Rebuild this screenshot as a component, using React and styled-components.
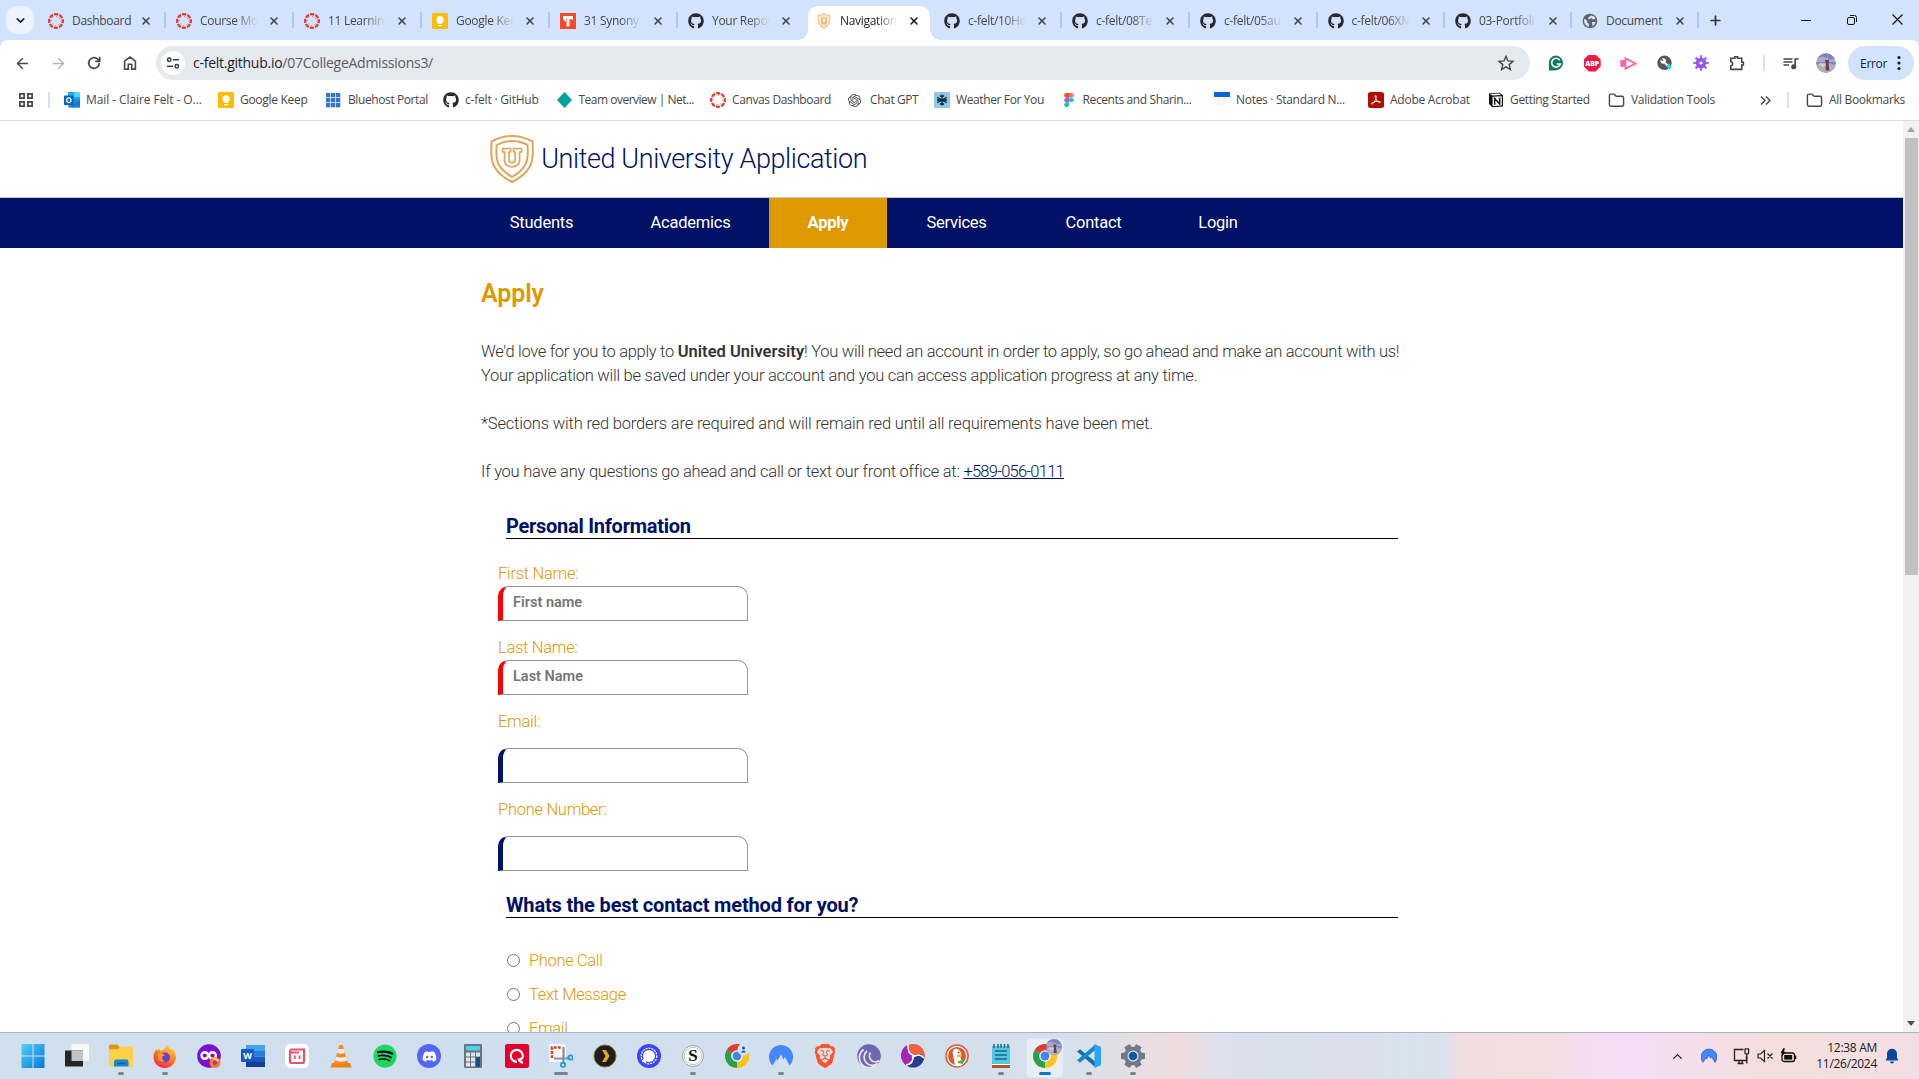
import React from "react";
import styled, { createGlobalStyle, css } from "styled-components";
import { FaGithub, FaSpotify, FaDiscord } from "react-icons/fa";
import { SiOpenai, SiBrave } from "react-icons/si";
import { ArrowLeft, ArrowRight, ChevronDown, ChevronUp, Plus, X, Folder } from "lucide-react";

const NAVY = "#001166";
const GOLD = "#de9800";

const Global = createGlobalStyle`
  * { box-sizing: border-box; }
  html, body { margin: 0; height: 100%; overflow: hidden; background: #fff; }
  svg { display: block; flex: none; }
`;

const Screen = styled.div`
  width: 1919px;
  height: 1079px;
  display: flex;
  flex-direction: column;
  overflow: hidden;
  font-family: "Open Sans", "Noto Sans", sans-serif;
`;

/* ---------- Browser tabs ---------- */
const TabStrip = styled.div`
  height: 40px;
  flex: none;
  display: flex;
  align-items: center;
  background: #d3e3fd;
  padding-left: 6px;
`;
const TabSearch = styled.button`
  width: 28px;
  height: 28px;
  border: 0;
  padding: 0;
  margin-right: 4px;
  border-radius: 10px;
  background: #ecf3fe;
  display: grid;
  place-items: center;
  color: #1f1f1f;
`;
const Tab = styled.div`
  position: relative;
  width: ${(p) => p.$w || 128}px;
  height: 34px;
  align-self: flex-end;
  flex: none;
  display: flex;
  align-items: center;
  padding: 0 10px 4px 10px;
  font-size: 12px;
  letter-spacing: -0.3px;
  color: #474747;
  ${(p) => p.$line && css`
    &::after {
      content: "";
      position: absolute;
      right: 0;
      top: 6px;
      width: 2px;
      height: 16px;
      background: #a8c7fa;
    }
  `}
  ${(p) => p.$active && css`
    color: #1f1f1f;
    &::before {
      content: "";
      position: absolute;
      z-index: 0;
      left: 2px;
      right: 4px;
      top: 0;
      bottom: 0;
      background: #fff;
      border-radius: 10px 10px 0 0;
    }
  `}
`;
const Flare = styled.i`
  position: absolute;
  bottom: 0;
  width: 10px;
  height: 10px;
  ${(p) => p.$side}: ${(p) => (p.$side === "left" ? -8 : -6)}px;
  background: radial-gradient(circle at ${(p) => (p.$side === "left" ? "0 0" : "100% 0")}, transparent 9.5px, #fff 10px);
`;
const TabIcon = styled.span`
  position: relative;
  width: 16px;
  height: 16px;
  margin-right: 8px;
  flex: none;
`;
const TabTitle = styled.span`
  position: relative;
  width: 58px;
  flex: none;
  white-space: nowrap;
  line-height: 18px;
  ${(p) => p.$fade && css`mask-image: linear-gradient(90deg, #000 62%, transparent 100%);`}
`;
const TabClose = styled.span`
  position: relative;
  margin-left: 8px;
  width: 16px;
  display: grid;
  place-items: center;
`;
const NewTab = styled.span`
  width: 28px;
  margin-left: 2px;
  display: grid;
  place-items: center;
  color: #303030;
`;
const WindowControls = styled.div`
  margin-left: auto;
  margin-bottom: 1px;
  display: flex;
  color: #111;
`;
const WindowButton = styled.span`
  width: 46px;
  height: 28px;
  display: grid;
  place-items: center;
  &:last-child { width: 44px; }
`;

/* ---------- Toolbar ---------- */
const ToolbarBack = styled.div`
  background: #d3e3fd;
  flex: none;
`;
const Toolbar = styled.div`
  height: 46px;
  background: #fff;
  border-radius: 8px 8px 0 0;
  display: flex;
  align-items: center;
  padding: 0 5px 0 4px;
  color: #474747;
`;
const NavButton = styled.span`
  width: 36px;
  display: grid;
  place-items: center;
  color: ${(p) => (p.$off ? "#b5b5b5" : "#474747")};
`;
const Omnibox = styled.div`
  width: 1374px;
  height: 34px;
  margin-left: 8px;
  border-radius: 17px;
  background: #e5e9f0;
  display: flex;
  align-items: center;
  padding: 0 15px 0 5px;
`;
const SiteInfo = styled.span`
  width: 24px;
  height: 24px;
  border-radius: 50%;
  background: #fff;
  display: grid;
  place-items: center;
`;
const Url = styled.span`
  flex: 1;
  margin: -1px 0 0 8px;
  font-size: 14px;
  letter-spacing: -0.26px;
  color: #5a5d61;
  b { font-weight: 400; color: #1f1f1f; }
`;
const Extensions = styled.div`
  display: flex;
  align-items: center;
  margin-left: 8px;
`;
const ExtButton = styled.span`
  width: 36.2px;
  display: grid;
  place-items: center;
`;
const Rule = styled.i`
  width: 2px;
  height: 16px;
  background: #d3e3fd;
  margin-left: ${(p) => p.$l || 0}px;
  margin-right: ${(p) => p.$r || 0}px;
`;
const Avatar = styled.span`
  width: 20px;
  height: 20px;
  margin: 0 12px 0 17px;
  border-radius: 50%;
  overflow: hidden;
`;
const ErrorPill = styled.span`
  width: 66px;
  height: 34px;
  border-radius: 17px;
  background: #d3e3fd;
  color: #041e49;
  font-size: 12px;
  letter-spacing: -0.3px;
  display: flex;
  align-items: center;
  justify-content: space-between;
  padding: 0 13px 0 12px;
`;

/* ---------- Bookmarks ---------- */
const BookmarkBar = styled.div`
  height: 35px;
  flex: none;
  display: flex;
  align-items: center;
  padding: 0 14px 6px 18px;
  background: #fff;
  border-bottom: 1px solid #dcdcdc;
  color: #474747;
  font-size: 12px;
`;
const Bookmark = styled.span`
  width: ${(p) => p.$w}px;
  flex: none;
  display: flex;
  align-items: center;
  gap: 6px;
  white-space: nowrap;
`;
const BookmarkLabel = styled.span`
  margin-top: -1px;
  letter-spacing: ${(p) => p.$ls ?? -0.3}px;
`;
const Overflow = styled.span`
  margin-left: auto;
`;
const BIcon = styled.span`
  width: 16px;
  height: 16px;
  flex: none;
  display: flex;
  align-items: center;
`;

/* ---------- Page ---------- */
const Viewport = styled.div`
  height: 911px;
  flex: none;
  display: flex;
  overflow: hidden;
`;
const Page = styled.div`
  flex: 1;
  height: 911px;
  overflow: hidden;
  background: #fff;
  font-family: Roboto, "Liberation Sans", sans-serif;
  font-weight: 300;
  font-size: 16.5px;
  color: #333;
`;
const SiteHeader = styled.header`
  height: 77px;
  border-bottom: 1px solid #c8c8c8;
  display: flex;
  align-items: center;
  padding: 0 0 0 490px;
  gap: 7px;
`;
const SiteTitle = styled.h1`
  margin: 0;
  font-size: 27px;
  font-weight: 300;
  letter-spacing: -0.39px;
  color: ${NAVY};
`;
const SiteNav = styled.nav`
  height: 50px;
  background: ${NAVY};
  display: flex;
  padding-left: 471px;
`;
const NavLink = styled.a`
  width: ${(p) => p.$w}px;
  display: grid;
  place-items: center;
  padding-bottom: 2px;
  color: #fff;
  letter-spacing: -0.25px;
  font-weight: ${(p) => (p.$active ? 700 : 400)};
  background: ${(p) => (p.$active ? GOLD : "transparent")};
`;
const Main = styled.main`
  width: 942px;
  margin-left: 481px;
`;
const PageTitle = styled.h2`
  margin: 0;
  padding-top: 29px;
  height: 92px;
  font-size: 25px;
  line-height: 34px;
  font-weight: 600;
  color: ${GOLD};
  letter-spacing: -0.1px;
`;
const Copy = styled.p`
  margin: 0 0 24px;
  line-height: 24px;
  letter-spacing: -0.25px;
  white-space: nowrap;
  b { font-weight: 600; letter-spacing: 0.03px; }
  a { color: ${NAVY}; text-decoration: underline; letter-spacing: -0.75px; }
`;
const Tracked = styled.span`
  letter-spacing: ${(p) => p.$ls}px;
`;
const Legend = styled.h3`
  width: 892px;
  height: 27px;
  margin: ${(p) => p.$top}px 0 0 25px;
  border-bottom: 1px solid #000;
  font-size: 20px;
  line-height: 29px;
  font-weight: 700;
  letter-spacing: ${(p) => p.$ls}px;
  color: ${NAVY};
`;
const Field = styled.label`
  display: block;
  margin-left: 17px;
  padding-top: ${(p) => p.$top}px;
  line-height: 24px;
  letter-spacing: -0.28px;
  color: ${GOLD};
`;
const Input = styled.input`
  display: block;
  width: 250px;
  height: 35px;
  margin: ${(p) => p.$gap || 0}px 0 0;
  padding: 0 10px 2px;
  border: 1px solid #999;
  border-left: 5px solid ${(p) => (p.$required ? "#f00" : NAVY)};
  border-radius: 10px 10px 0 0;
  outline: none;
  font: 600 14.5px Roboto, sans-serif;
  &::placeholder { color: #757575; opacity: 1; }
`;
const Options = styled.div`
  padding: 25px 0 0 26px;
`;
const Option = styled.label`
  height: 34.3px;
  display: flex;
  align-items: center;
  gap: 9px;
  color: ${GOLD};
  letter-spacing: -0.35px;
  input { width: 13px; height: 13px; margin: 0; }
`;
const Scrollbar = styled.div`
  width: 16px;
  background: #f1f1f1;
  display: flex;
  flex-direction: column;
  align-items: center;
  padding: 6px 0 6px;
`;
const Thumb = styled.div`
  width: 13px;
  height: 437px;
  margin: 6px 0 auto;
  background: #c1c1c1;
`;

/* ---------- Taskbar ---------- */
const Taskbar = styled.footer`
  height: 47px;
  flex: none;
  display: flex;
  align-items: center;
  border-top: 1px solid #a9b2be;
  padding: 0 19px 0 11px;
  background: linear-gradient(90deg,
    #d2e0ed 0, #d0dfee 500px, #d4e1ec 1060px, #ebdde1 1150px, #ecdcdf 1180px, #dfe0eb 1220px,
    #d8e2ed 1290px, #dedfeb 1340px, #d8e3ee 1400px, #dae2ec 1445px, #f1dddf 1462px,
    #f3dfe0 1540px, #f3def2 1590px, #f3def6 1640px, #f3dfec 1690px, #f5dedb 1770px, #f4dfe0 1840px, #f3dde4 1919px);
`;
const TaskItem = styled.span`
  width: 44px;
  height: 46px;
  flex: none;
  display: flex;
  flex-direction: column;
  align-items: center;
  justify-content: flex-end;
  gap: 4px;
  padding-bottom: 4px;
`;
const TaskTile = styled.span`
  position: relative;
  width: 38px;
  height: 24px;
  display: grid;
  place-items: center;
  ${(p) => p.$active && css`
    &::before {
      content: "";
      position: absolute;
      left: 0;
      right: 0;
      top: -6px;
      height: 38px;
      border-radius: 4px;
      background: #e7eef6;
      border: 1px solid #dbe3ec;
    }
  `}
  svg { position: relative; }
`;
const Indicator = styled.i`
  position: relative;
  width: ${(p) => p.$w}px;
  height: 3px;
  border-radius: 2px;
  background: ${(p) => (p.$active ? "#0b74d1" : "#7b8289")};
`;
const Tray = styled.div`
  margin-left: auto;
  display: flex;
  align-items: center;
  color: #1c1c1c;
`;
const TrayIcon = styled.span`
  width: ${(p) => p.$w}px;
  display: grid;
  place-items: center;
`;
const Clock = styled.div`
  width: 73px;
  margin: -1px 7px 0 0;
  font-size: 12px;
  line-height: 16px;
  text-align: right;
  letter-spacing: -0.3px;
  color: #1a1a1a;
`;

/* ---------- Icons ---------- */
const Svg = ({ s = 16, v = 16, children, ...r }) => (
  <svg width={s} height={s} viewBox={`0 0 ${v} ${v}`} fill="none" {...r}>{children}</svg>
);
const Canvas = () => (
  <Svg>
    <circle cx="8" cy="8" r="6.8" stroke="#e03b30" strokeWidth="2.3" strokeDasharray="4.2 1.14" strokeDashoffset="2.1" />
    <circle cx="8" cy="8" r="4.6" stroke="#e03b30" strokeWidth="0.9" strokeDasharray="0.9 2.71" strokeDashoffset="0.45" />
  </Svg>
);
const Keep = () => (
  <Svg>
    <rect width="16" height="16" rx="1.6" fill="#fbbc04" />
    <circle cx="8" cy="6.8" r="3.6" fill="#fff" />
    <path d="M6 9h4v2H6zM6 12h4v1.2H6z" fill="#fff" />
  </Svg>
);
const Thesaurus = () => (
  <Svg>
    <rect width="16" height="16" fill="#f9472a" />
    <path d="M3 3h10v3.6h-2.2V6H9.5v7.5H6.6V8.6C4.5 8.6 3 7.2 3 5z" fill="#fff" />
    <path d="M6.600 5.500v2" stroke="#f9472a" strokeWidth="0.8" />
  </Svg>
);
const Shield = ({ s = 16 }) => (
  <svg width={s * 0.92} height={s} viewBox="0 0 44 48" fill="none" stroke="#dda658" strokeWidth="2" strokeLinejoin="round">
    <path d="M22 1C15 1 8 3 1.500 6.500C1 20 1 26 4.500 32C9 40 16 44 22 47C28 44 35 40 39.500 32C43 26 43 20 42.500 6.500C36 3 29 1 22 1Z" />
    <path d="M22 6C16 6 11 7.500 6.500 10C6.200 20 6 25 9 30C12.500 36 17 39 22 42C27 39 31.500 36 35 30C38 25 37.800 20 37.500 10C33 7.500 28 6 22 6Z" />
    <path d="M12.500 13.500H20.500V17H19V25C19 28.400 25 28.400 25 25V17H23.500V13.500H31.500V17H29.500V25.500C29.500 34 14.500 34 14.500 25.500V17H12.500Z" strokeWidth="1.700" />
  </svg>
);
const SmallShield = () => (
  <Svg>
    <path d="M8 .8 13.800 2.600C14 7 14 12 8 15.200C2 12 2 7 2.200 2.600Z" fill="#fae8cd" stroke="#ecc58e" strokeWidth="1.200" />
    <path d="M5 4.500h6V9c0 3.500-6 3.500-6 0z" fill="#e9bd7f" />
    <path d="M7 5.500h2v3.300H7z" fill="#fff" />
  </Svg>
);
const Globe = () => (
  <Svg>
    <circle cx="8" cy="8" r="7.300" fill="#5f6368" />
    <path d="M2 6c2 0 3 1 3 2.500S7 10 7 11.500L6.500 14C4 13 2 10.500 2 8zM9 2.500c2 0 3.800 1.300 4.500 3L11 6.500 9.500 5 7 6.500 5.800 5C7 4.500 7.500 3 9 2.500zM10 9l3.500 0c-.3 2-1.500 3.500-3 4.300z" fill="#d3e3fd" />
  </Svg>
);
const Outlook = () => (
  <Svg>
    <rect x="4" y="0" width="12" height="8" fill="#28a8ea" />
    <rect x="10" y="0" width="6" height="5" fill="#50d9ff" />
    <path d="M3 7l13 0v8.500H4.500z" fill="#1490df" />
    <path d="M16 7.500v8H5z" fill="#0f6cbd" opacity=".55" />
    <rect x="0" y="3.500" width="9.500" height="9.500" rx="0.800" fill="#0364b8" />
    <ellipse cx="4.800" cy="8.200" rx="2.100" ry="2.400" stroke="#fff" strokeWidth="1.300" />
  </Svg>
);
const Grid9 = () => (
  <Svg>
    {[0, 1, 2].map((r) => [0, 1, 2].map((c) => (
      <rect key={`${r}${c}`} x={c * 5} y={1 + r * 5} width="4.300" height="4.300" fill="#3575d3" />
    )))}
  </Svg>
);
const Diamond = () => <Svg><path d="M7.500 0l7.500 8-7.500 8L0 8z" fill="#05a19b" /></Svg>;
const Snow = () => (
  <Svg>
    <rect width="16" height="16" fill="#8ec9e6" />
    <g stroke="#0d2a3a" strokeWidth="1.200">
      <path d="M8 2.500v11M3.300 5.200l9.400 5.600M3.300 10.800l9.400-5.600M6 3.500l2 1.800 2-1.800M6 12.500l2-1.800 2 1.800M3.200 7l2.300 1-2.300 1M12.800 7l-2.300 1 2.300 1" />
    </g>
  </Svg>
);
const Figma = () => (
  <Svg>
    <path d="M5.500 1H8v4.700H5.500a2.350 2.350 0 0 1 0-4.700z" fill="#f24e1e" />
    <path d="M8 1h2.500a2.350 2.350 0 0 1 0 4.700H8z" fill="#ff7262" />
    <path d="M5.500 5.700H8v4.700H5.500a2.350 2.350 0 0 1 0-4.700z" fill="#a259ff" />
    <circle cx="10.400" cy="8" r="2.350" fill="#1abcfe" />
    <path d="M5.500 10.400H8v2.400a2.400 2.400 0 1 1-2.500-2.400z" fill="#0acf83" />
  </Svg>
);
const Notes = () => (
  <Svg>
    <rect y="0" width="16" height="5" fill="#0b66d8" />
    <path d="M3 7h12M3 9h9M3 11h10M3 12.800h7" stroke="#eeeeee" strokeWidth="1" />
  </Svg>
);
const Acrobat = () => (
  <Svg>
    <rect width="16" height="16" rx="2.500" fill="#b30b00" />
    <path d="M7.500 3.500c1.500 0 .5 3-.5 5S4.500 12.800 3.700 12c-.8-1 2-2.300 4.500-2.600s4.600.1 4.200 1c-.5 1-3-.8-4-2.400S6.300 3.500 7.500 3.500z" stroke="#fff" />
  </Svg>
);
const Notion = () => (
  <Svg>
    <path d="M1 1.500 11.500.7 15 3.200V14.500L4.500 15.300 1 12z" fill="#111" />
    <path d="M2 2.200l9-.6 2 1.300-8.600.6z" fill="#fff" />
    <path d="M4.600 4.800l9.200-.6v9.200l-9.200.7z" fill="#fff" />
    <path d="M6.700 12V6.500l5 5.500V6.200" stroke="#111" strokeWidth="1.400" />
    <path d="M5.700 6.400h2M10.600 6h2M5.700 12.200h2" stroke="#111" strokeWidth=".8" />
  </Svg>
);
const AppsIcon = () => (
  <Svg stroke="#474747" strokeWidth="1.700">
    <path d="M1.900 1.900h4.200v4.200H1.900zM9.900 1.900h4.200v4.200H9.900zM1.900 9.900h4.200v4.200H1.900zM9.900 9.900h4.200v4.200H9.900z" />
  </Svg>
);
const Tune = () => (
  <Svg stroke="#3c3c3c" strokeWidth="1.500">
    <circle cx="4.200" cy="4.700" r="1.700" /><path d="M8 4.700h6" />
    <circle cx="11.800" cy="11.300" r="1.700" /><path d="M2 11.300h6" />
  </Svg>
);
const Reload = () => (
  <Svg stroke="#474747" strokeWidth="1.700">
    <path d="M13.300 8A5.300 5.300 0 1 1 11.600 4.100L13.200 5.700" />
    <path d="M13.700 1.800v4.500H9.200" />
  </Svg>
);
const Home = () => (
  <Svg stroke="#474747" strokeWidth="1.600">
    <path d="M2.600 14.100V6.200L8 2l5.400 4.200v7.900H9.700V9.300H6.300v4.800z" />
  </Svg>
);
const StarIcon = () => (
  <Svg s={18} v={18} stroke="#474747" strokeWidth="1.400">
    <path d="M9 2.200l2 4.700 5 .4-3.800 3.300 1.200 5L9 12.900l-4.400 2.700 1.200-5L2 7.300l5-.4z" />
  </Svg>
);
const Grammarly = () => (
  <Svg>
    <path d="M8 .6a7.400 7.400 0 1 1-1 14.800H.9V8A7.300 7.300 0 0 1 8 .6z" fill="#0c7a60" />
    <path d="M11.700 5.200A4.400 4.400 0 1 0 12.300 9H8.800" stroke="#fff" strokeWidth="1.600" />
  </Svg>
);
const AbpBox = styled.span`
  width: 17px;
  height: 17px;
  display: grid;
  place-items: center;
  background: #ed1e45;
  clip-path: polygon(30% 0, 70% 0, 100% 30%, 100% 70%, 70% 100%, 30% 100%, 0 70%, 0 30%);
  color: #fff;
  font-size: 7px;
  font-weight: 800;
  letter-spacing: -0.2px;
`;
const PinkPlay = () => (
  <Svg s={17}>
    <path d="M.3 4.800v6.400h5V4.800z" fill="#f765b8" />
    <path d="M5.200 3.200 14.600 8l-9.400 4.800z" fill="#fff" stroke="#f765b8" strokeWidth="1.800" />
  </Svg>
);
const Wrench = () => (
  <Svg>
    <circle cx="7.500" cy="7.800" r="7.200" fill="#54585c" />
    <circle cx="6.200" cy="6" r="2.700" fill="#fff" />
    <path d="M3.200 3.200l3 2.600" stroke="#54585c" strokeWidth="1.300" />
    <path d="M7.500 7.500l3 3" stroke="#fff" strokeWidth="2.200" />
    <path d="M9.500 11l2.500-2.500 3 3.500-3 3z" fill="#2bd5dc" />
  </Svg>
);
const Flower = () => (
  <Svg>
    <g stroke="#a263f2" strokeWidth="2.200">
      <path d="M8 .3v15.400M.3 8h15.400M2.600 2.600l10.800 10.800M13.400 2.600L2.600 13.400" />
    </g>
    <circle cx="8" cy="8" r="5.200" fill="#9655ea" /><circle cx="8" cy="8" r="1.600" fill="#fff" />
  </Svg>
);
const Puzzle = () => (
  <Svg stroke="#474747" strokeWidth="1.600">
    <path d="M1.800 3.200h4V1.800h2.800v1.400h4.200v4h1.600v2.800h-1.600v4.400H1.800v-3.600c2.600-.4 2.600-3.800 0-4.200z" />
  </Svg>
);
const Media = () => (
  <Svg stroke="#474747" strokeWidth="1.700">
    <path d="M.5 4h9M.5 7h9M.5 10h5.500M12.200 11.500V4h3.500" />
    <circle cx="10.700" cy="11.700" r="1.700" fill="#474747" />
  </Svg>
);
const Portrait = ({ s = 20 }) => (
  <Svg s={s} v={20}>
    <circle cx="10" cy="10" r="10" fill="#7b86bd" />
    <path d="M1 6q5-4 9-1t9 0v4H1z" fill="#a9acd2" />
    <path d="M.5 12q8-4 19 0-2 8-9.500 8T.5 12z" fill="#b7aeb9" />
    <path d="M2 11q4-2 8 1l-3 2z" fill="#e4cfa0" />
    <path d="M11 4.500l2 3-.5 3 1 7h-4l.5-7-1-3z" fill="#663a68" />
    <circle cx="11.200" cy="5.800" r="1.300" fill="#d5a893" />
  </Svg>
);
const Dots = () => (
  <Svg s={4} height={16} viewBox="0 0 4 16" fill="#041e49">
    <circle cx="2" cy="2.500" r="1.600" /><circle cx="2" cy="8" r="1.600" /><circle cx="2" cy="13.500" r="1.600" />
  </Svg>
);
const Octo = ({ c = "#24292f" }) => <FaGithub size={16} color={c} />;

/* Taskbar drawings share a 24 unit grid. */
const T = ({ children }) => <Svg s={24} v={24}>{children}</Svg>;
const Start = () => (
  <T>
    <defs><linearGradient id="win" x1="0" y1="0" x2="1" y2="1"><stop stopColor="#4dd0fb" /><stop offset="1" stopColor="#0a78d4" /></linearGradient></defs>
    <path d="M.5 0h11v11.500H.5zM12.500 0h11v11.500h-11zM.5 12.500h11V24H.5zM12.500 12.500h11V24h-11z" fill="url(#win)" />
  </T>
);
const TaskView = () => (
  <T><rect x="6.500" y="0" width="17.500" height="17" fill="#f8f8f8" /><rect x="0" y="6.500" width="18" height="16" fill="#262626" /><path d="M6.500 6.500H18V17H6.500z" fill="#c4c4c4" /></T>
);
const Explorer = () => (
  <T><path d="M0 2q0-1.500 1.500-1.500H8L10.500 3v4H0z" fill="#d99a10" /><path d="M0 5.500 10 5l2-2.500h11q1 0 1 1V21q0 1.500-1.500 1.500h-21Q0 22.500 0 21z" fill="#fdcf4a" /><path d="M5 22.500v-5q0-2 2-2h10.500q2 0 2 2v5z" fill="#1887d3" /><path d="M8 19.500h8.500" stroke="#0c5d9e" strokeWidth="1.500" /></T>
);
const Firefox = () => (
  <T>
    <defs><linearGradient id="ff" x1=".8" y1="0" x2=".3" y2="1"><stop stopColor="#ffe23e" /><stop offset=".45" stopColor="#ff8a1d" /><stop offset="1" stopColor="#f2264f" /></linearGradient></defs>
    <path d="M14 0c1 3 3 4 4 6l2-1c3 4 4 9 2 12.500C20 22 16 24 12 24 5 24 .5 19 .5 13 .5 9 2 7 3.500 5l1 2L7 4.500 7.500 7c2 0 3-1 4-2.500S13 2 14 0z" fill="url(#ff)" />
    <circle cx="12" cy="13.500" r="5" fill="#6a3fd0" /><path d="M5 9q5 0 7 2l-2.500 1.500Q8 16 12 17q-5 2-7-2z" fill="#ff9a26" />
  </T>
);
const FirefoxPrivate = () => (
  <T>
    <circle cx="12" cy="12" r="11.800" fill="#7a0ed2" /><circle cx="7.800" cy="11.500" r="3.300" stroke="#fff" strokeWidth="2.400" /><circle cx="15.500" cy="11.500" r="3.300" stroke="#fff" strokeWidth="2.400" />
    <circle cx="18" cy="18.500" r="5.500" fill="#ff7a25" /><path d="M15 14l4 0 3 2-2 2z" fill="#ffd43c" /><circle cx="18" cy="18.800" r="2.200" fill="#7542cf" />
  </T>
);
const WordText = styled.span`
  position: absolute;
  left: 7px;
  top: 5px;
  width: 13px;
  height: 13px;
  display: grid;
  place-items: center;
  background: #185abd;
  color: #fff;
  font-size: 9px;
  font-weight: 700;
  border-radius: 1px;
`;
const Word = () => (
  <><T><path d="M5 1h19v6H5z" fill="#41a5ee" /><path d="M5 7h19v5.500H5z" fill="#2b7cd3" /><path d="M5 12.500h19v5.500H5z" fill="#185abd" /><path d="M5 18h19v5H5z" fill="#103f91" /></T><WordText>W</WordText></>
);
const PinkBook = () => (
  <T><rect width="24" height="24" rx="5" fill="#fff" /><path d="M5 8.500v8.500q0 2 2 2h10q2 0 2-2V5.500H7q-2 0-2 3h9" stroke="#f0506e" strokeWidth="2.200" /><path d="M9.800 11.500v3.500M14.500 11.500v3.500" stroke="#f0506e" strokeWidth="1.800" /></T>
);
const Vlc = () => (
  <T><path d="M3 19h18l1.500 4.500h-21z" fill="#f07f0d" /><path d="M10.500 1h3l5.500 18q-7 2.500-14 0z" fill="#f58a1f" /><path d="M9.300 5h5.400l1.300 4q-4 1.500-8 0zM7 12.500q5 1.800 10 0l1.200 4q-6 2.300-12.400 0z" fill="#e9edf0" /></T>
);
const Calc = () => (
  <T><rect x="3" width="18" height="24" rx="1" fill="#69737c" /><rect x="5" y="2" width="14" height="4.500" fill="#4cd3ee" />{[0, 1, 2].map((r) => [0, 1, 2].map((c) => <rect key={`${r}${c}`} x={5 + c * 5} y={8.5 + r * 5} width="4" height="4" fill={c === 2 && r > 0 ? "#174c86" : "#dfe5e9"} />))}<path d="M15 13.500h4v9h-4z" fill="#174c86" /></T>
);
const RedQ = () => (
  <T><rect width="24" height="24" rx="2" fill="#e3002d" /><path d="M12 17.800a6 6 0 1 1 5.800-5.800c0 2.500-1.500 3.500-3 2.500M13.500 14.500q.5 3 4.500 4.500" stroke="#fff" strokeWidth="2.200" /></T>
);
const Snip = () => (
  <T><rect width="17" height="18" rx="1.500" fill="#fafafa" /><path d="M3 14V3.500h10" stroke="#d2451e" strokeWidth="2.600" strokeDasharray="2.800 1.300" /><path d="M14.500 3v17M5 14.500h16" stroke="#84909b" strokeWidth="2.200" /><circle cx="14" cy="20.800" r="2.200" stroke="#1b9ce2" strokeWidth="1.700" /><circle cx="21.500" cy="13.500" r="2.200" stroke="#1b9ce2" strokeWidth="1.700" /></T>
);
const Plex = () => (
  <T><circle cx="12" cy="12" r="11" fill="#1d1e20" stroke="#8b6a26" /><path d="M9 6h4l3.500 6-3.500 6H9l3.500-6z" fill="#eda51b" /></T>
);
const SText = styled.span`
  position: absolute;
  inset: 0 7px;
  display: grid;
  place-items: center;
  font: 700 17px "Liberation Serif", serif;
  color: #111;
`;
const StandardS = () => (
  <><T><circle cx="12" cy="12" r="10.500" fill="#fff" stroke="#9fa5aa" /><circle cx="12" cy="12" r="8.700" stroke="#b0b5ba" strokeWidth=".8" /></T><SText>S</SText></>
);
const ChromeMark = ({ badge }) => (
  <T>
    <path d="M12 12 1.600 6A12 12 0 0 1 22.400 6z" fill="#e33b2e" /><path d="M12 12 22.400 6A12 12 0 0 1 12 24z" fill="#fcc31c" /><path d="M12 12v12A12 12 0 0 1 1.600 6z" fill="#2aa148" />
    <path d="M12 6.500h10.700A12 12 0 0 1 12 24l5-9z" fill="#fcc31c" /><circle cx="12" cy="12" r="5.800" fill="#fff" /><circle cx="12" cy="12" r="4.500" fill="#4285f4" />
    {badge && <><circle cx="18.500" cy="5.500" r="6" fill="#d3e3fd" /><circle cx="18.500" cy="4" r="1.500" fill="#174ea6" /><path d="M15.800 8.500q2.700-4 5.400 0z" fill="#174ea6" /></>}
  </T>
);
const ProfileBadge = styled.span`
  position: absolute;
  left: 20px;
  top: -5px;
  border-radius: 50%;
`;
const Nord = () => (
  <T><path d="M3.500 21.500A12 12 0 1 1 20.500 21.500L16 13l-1.500 2.500L12 10.500 8.500 16.500 7.500 15z" fill="#4687ff" /></T>
);
const BitTorrent = () => (
  <T><circle cx="12" cy="12" r="11.800" fill="#7167ae" /><path d="M18.500 21.800A10 10 0 0 1 6.500 5.500M20.500 19.500A8 8 0 0 1 10 7M22.300 16.500A6 6 0 0 1 13.500 8.500" stroke="#e9e7f4" strokeWidth="1.700" /></T>
);
const Swirl = () => (
  <T><circle cx="12" cy="12" r="11.500" fill="#253d8f" /><path d="M12 12Q6 9 7 1q9-3 14 3 4 6 2 10-2-7-11-2z" fill="#f0623a" /><path d="M12 12q0 8-7 9-6-5-5-11 1-6 6-9 0 8 6 11z" fill="#a624b8" /><path d="M7 1q-1 9 7 11M23 14q-5-6-12 0M5 21q8-1 7-10" stroke="#fff" strokeWidth="1.500" /></T>
);
const Duck = () => (
  <T><circle cx="12" cy="12" r="11.800" fill="#de5833" /><circle cx="12" cy="12" r="9.700" stroke="#fff" strokeWidth="1.300" /><path d="M8 6q3-3 6 0 3 2 1.500 7l2 8q-5 2-7.500.5L8.500 13Q7 9 8 6z" fill="#fff" /><path d="M12 10.500h5l-1 2.500h-4z" fill="#fcc21b" /><circle cx="13.500" cy="8.500" r=".8" fill="#224" /><path d="M13 17l5-1v4l-5-1z" fill="#4caf50" /></T>
);
const Notepad = () => (
  <T><rect x="3" y="2" width="18" height="19" fill="#55c6e0" /><path d="M5 0v4M9 0v4M12 0v4M15.500 0v4M19 0v4" stroke="#27647d" strokeWidth="1.500" /><path d="M6 7h12M6 11h12M6 15h12" stroke="#126a8d" strokeWidth="1.600" /><path d="M3 21h18v3H3z" fill="#b3581b" /><path d="M3 20.500h18" stroke="#fff" /></T>
);
const VsCode = () => (
  <T><path d="M0 8l3-2.300L18 18v5.500L0 8z" fill="#0f6fb3" transform="translate(0 -.5)" /><path d="M0 16l3 2.500L18 6V.5L0 16z" fill="#1786cf" transform="translate(0 .2)" /><path d="M17.500 0 24 3v18l-6.500 3z" fill="#2aa5ee" /></T>
);
const Gear = () => (
  <T><g fill="#707b85"><circle cx="12" cy="12" r="9.200" />{[0, 60, 120, 180, 240, 300].map((a) => <rect key={a} x="8.700" y="0" width="6.600" height="6" rx="1" transform={`rotate(${a + 30} 12 12)`} />)}</g><circle cx="12" cy="12" r="5.500" fill="#dce2e8" /><circle cx="12" cy="12" r="4.300" fill="#0c59a4" /></T>
);
const SignalDisk = () => (
  <T><circle cx="12" cy="12" r="12" fill="#3a45f5" /><circle cx="12" cy="12" r="7.800" stroke="#fff" strokeWidth="1.300" strokeDasharray="2 1" /><circle cx="12" cy="12" r="6" fill="#fff" /><path d="M5.500 18.500l.8-4 3.500 3z" fill="#fff" /></T>
);
const DiscordGlyph = styled.span`
  position: absolute;
  left: 11.5px;
  top: 4.5px;
`;
const DiscordDisk = () => (
  <><T><circle cx="12" cy="12" r="12" fill="#5865f2" /></T><DiscordGlyph><FaDiscord size={15} color="#fff" /></DiscordGlyph></>
);
const SpotifyDisk = styled(FaSpotify)`
  background: radial-gradient(#000 60%, transparent 61%);
`;
const Monitor = () => (
  <Svg s={18} v={18} stroke="#222" strokeWidth="1.300"><path d="M11.500 2.500H2.500v11h12V9M5.500 16.500h6M7 13.500v3M10 13.500v3" /><rect x="13" y="1.800" width="3.600" height="5" rx=".5" /><path d="M14.800 7v9.500" /></Svg>
);
const Mute = () => (
  <Svg stroke="#222" strokeWidth="1.200"><path d="M1 6v4h2.500l4 3.500v-11L3.500 6zM10.500 5.500l5 5M15.500 5.500l-5 5" /></Svg>
);
const Battery = () => (
  <Svg s={17} v={17}><rect x="2" y="5" width="12.500" height="8.500" rx="2" stroke="#111" strokeWidth="1.300" /><path d="M4.200 7h8v4.600h-8z" fill="#111" /><path d="M15.500 7.500v3.500" stroke="#111" strokeWidth="1.600" /><path d="M3.500 0 .5 5h2L1.500 9 6 3.800H3.800L5 .5z" fill="#111" /></Svg>
);
const Bell = () => (
  <Svg fill="#0b469c"><path d="M8 .8a5 5 0 0 1 5 5v4l1.500 2.700h-13L3 9.800v-4a5 5 0 0 1 5-5zM6 13.500h4a2 2 0 0 1-4 0z" /></Svg>
);

/* ---------- Data ---------- */
const tabs = [
  { t: "Dashboard", i: <Canvas />, line: true },
  { t: "Course Mo", i: <Canvas />, line: true, fade: true },
  { t: "11 Learning", i: <Canvas />, line: true, fade: true },
  { t: "Google Kee", i: <Keep />, line: true, fade: true },
  { t: "31 Synony", i: <Thesaurus />, line: true, fade: true },
  { t: "Your Repos", i: <Octo />, fade: true },
  { t: "Navigation", i: <SmallShield />, active: true, fade: true },
  { t: "c-felt/10Ho", i: <Octo />, line: true, fade: true },
  { t: "c-felt/08Te", i: <Octo />, line: true, fade: true },
  { t: "c-felt/05au", i: <Octo />, line: true, fade: true, w: 127.5 },
  { t: "c-felt/06XM", i: <Octo />, line: true, fade: true, w: 127.5 },
  { t: "03-Portfoli", i: <Octo />, line: true, fade: true, w: 127 },
  { t: "Document", i: <Globe />, line: true, w: 127 },
];
const bookmarks = [
  ["Mail - Claire Felt - O...", <Outlook />, 154, -0.08],
  ["Google Keep", <Keep />, 108],
  ["Bluehost Portal", <Grid9 />, 117, -0.4],
  ["c-felt · GitHub", <Octo />, 113.5, -0.2],
  ["Team overview | Net...", <Diamond />, 153.5, -0.5],
  ["Canvas Dashboard", <Canvas />, 138, -0.38],
  ["Chat GPT", <SiOpenai size={13} color="#444" />, 86, -0.4],
  ["Weather For You", <Snow />, 126.5, -0.38],
  ["Recents and Sharin...", <Figma />, 153.5, -0.38],
  ["Notes · Standard N...", <Notes />, 154],
  ["Adobe Acrobat", <Acrobat />, 120, -0.25],
  ["Getting Started", <Notion />, 120, -0.34],
];
const links = [["Students", 141], ["Academics", 157], ["Apply", 118], ["Services", 139], ["Contact", 135], ["Login", 114]];
const apps = [
  [<Start />], [<TaskView />], [<Explorer />, 6], [<Firefox />, 6], [<FirefoxPrivate />], [<Word />], [<PinkBook />], [<Vlc />],
  [<SpotifyDisk size={24} color="#1ed760" />],
  [<DiscordDisk />], [<Calc />], [<RedQ />], [<Snip />, 14], [<Plex />], [<SignalDisk />], [<StandardS />, 6],
  [<ChromeMark badge />], [<Nord />, 6], [<SiBrave size={24} color="#fb542b" />], [<BitTorrent />], [<Swirl />], [<Duck />],
  [<Notepad />, 6], [<><ChromeMark /><ProfileBadge><Portrait s={16} /></ProfileBadge></>, 12, true], [<VsCode />, 6], [<Gear />, 6],
];

export default function App() {
  return (
    <Screen>
      <Global />
      <TabStrip>
        <TabSearch><ChevronDown size={13} strokeWidth={3} /></TabSearch>
        {tabs.map((t) => (
          <Tab key={t.t} $active={t.active} $line={t.line} $w={t.w}>
            {t.active && <><Flare $side="left" /><Flare $side="right" /></>}
            <TabIcon>{t.i}</TabIcon>
            <TabTitle $fade={t.fade}>{t.t}</TabTitle>
            <TabClose><X size={12} strokeWidth={3.2} /></TabClose>
          </Tab>
        ))}
        <NewTab><Plus size={15} strokeWidth={2.7} /></NewTab>
        <WindowControls>
          <WindowButton><Svg s={10} v={10} stroke="#111"><path d="M0 5.500h10" /></Svg></WindowButton>
          <WindowButton><Svg s={10} v={10} stroke="#111"><rect x=".5" y="2.500" width="7" height="7" rx="1.500" /><path d="M3 .5h4.500q2 0 2 2V7" /></Svg></WindowButton>
          <WindowButton><Svg s={11} v={11} stroke="#111" strokeWidth="1.200"><path d="M.5.5l10 10M10.500.5l-10 10" /></Svg></WindowButton>
        </WindowControls>
      </TabStrip>

      <ToolbarBack>
        <Toolbar>
          <NavButton><ArrowLeft size={17} /></NavButton>
          <NavButton $off><ArrowRight size={17} /></NavButton>
          <NavButton><Reload /></NavButton>
          <NavButton><Home /></NavButton>
          <Omnibox>
            <SiteInfo><Tune /></SiteInfo>
            <Url><b>c-felt.github.io</b>/07CollegeAdmissions3/</Url>
            <StarIcon />
          </Omnibox>
          <Extensions>
            <ExtButton><Grammarly /></ExtButton>
            <ExtButton><AbpBox>ABP</AbpBox></ExtButton>
            <ExtButton><PinkPlay /></ExtButton>
            <ExtButton><Wrench /></ExtButton>
            <ExtButton><Flower /></ExtButton>
            <ExtButton><Puzzle /></ExtButton>
            <Rule $l={8} $r={18} />
            <Media />
            <Avatar><Portrait /></Avatar>
            <ErrorPill>Error<Dots /></ErrorPill>
          </Extensions>
        </Toolbar>
      </ToolbarBack>

      <BookmarkBar>
        <AppsIcon />
        <Rule $l={14} $r={14} />
        {bookmarks.map(([t, i, w, ls]) => (
          <Bookmark key={t} $w={w}><BIcon>{i}</BIcon><BookmarkLabel $ls={ls}>{t}</BookmarkLabel></Bookmark>
        ))}
        <Bookmark><Folder size={17} strokeWidth={2} /><BookmarkLabel $ls={-0.3}>Validation Tools</BookmarkLabel></Bookmark>
        <Overflow><Svg s={11} v={11} stroke="#474747" strokeWidth="1.500"><path d="M1 1.500l4 4-4 4M6 1.500l4 4-4 4" /></Svg></Overflow>
        <Rule $l={16} $r={17} />
        <Bookmark><Folder size={17} strokeWidth={2} /><BookmarkLabel $ls={-0.3}>All Bookmarks</BookmarkLabel></Bookmark>
      </BookmarkBar>

      <Viewport>
        <Page>
          <SiteHeader>
            <Shield s={48} />
            <SiteTitle>United University Application</SiteTitle>
          </SiteHeader>
          <SiteNav>
            {links.map(([t, w]) => <NavLink key={t} $w={w} $active={t === "Apply"}>{t}</NavLink>)}
          </SiteNav>
          <Main>
            <PageTitle>Apply</PageTitle>
            <Copy>
              <Tracked $ls={-0.3}>We'd love for you to apply to <b>United University</b>! You will need an account in order to apply, so go ahead and make an account with us!</Tracked>
              <br />Your application will be saved under your account and you can access application progress at any time.
            </Copy>
            <Copy><Tracked $ls={-0.18}>*Sections with red borders are required and will remain red until all requirements have been met.</Tracked></Copy>
            <Copy>If you have any questions go ahead and call or text our front office at: <a>+589-056-0111</a></Copy>
            <Legend $top={28} $ls={-0.27}>Personal Information</Legend>
            <Field $top={23}>First Name:<Input $required placeholder="First name" /></Field>
            <Field $top={15}>Last Name:<Input $required placeholder="Last Name" /></Field>
            <Field $top={15}>Email:<Input $gap={14} /></Field>
            <Field $top={15}>Phone Number:<Input $gap={14} /></Field>
            <Legend $top={20} $ls={-0.16}>Whats the best contact method for you?</Legend>
            <Options>
              {["Phone Call", "Text Message", "Email"].map((o) => <Option key={o}><input type="radio" name="contact" />{o}</Option>)}
            </Options>
          </Main>
        </Page>
        <Scrollbar>
          <Svg s={8} height={5} viewBox="0 0 8 5" fill="#a3a3a3"><path d="M0 5l4-5 4 5z" /></Svg>
          <Thumb />
          <Svg s={8} height={5} viewBox="0 0 8 5" fill="#505050"><path d="M0 0l4 5 4-5z" /></Svg>
        </Scrollbar>
      </Viewport>

      <Taskbar>
        {apps.map(([icon, w = 0, active], n) => (
          <TaskItem key={n}>
            <TaskTile $active={active}>{icon}</TaskTile>
            <Indicator $w={w} $active={active} />
          </TaskItem>
        ))}
        <Tray>
          <TrayIcon $w={32}><ChevronUp size={15} /></TrayIcon>
          <TrayIcon $w={32}><Svg s={16} v={24}><path d="M3 21.500A12 12 0 1 1 21 21.500L16 13l-1.500 2.500L12 10.500 8.500 16.500 7.500 15z" fill="#4687ff" stroke="#24509f" /></Svg></TrayIcon>
          <TrayIcon $w={32}><Monitor /></TrayIcon>
          <TrayIcon $w={15}><Mute /></TrayIcon>
          <TrayIcon $w={32}><Battery /></TrayIcon>
          <Clock>12:38 AM<br />11/26/2024</Clock>
          <Bell />
        </Tray>
      </Taskbar>
    </Screen>
  );
}
